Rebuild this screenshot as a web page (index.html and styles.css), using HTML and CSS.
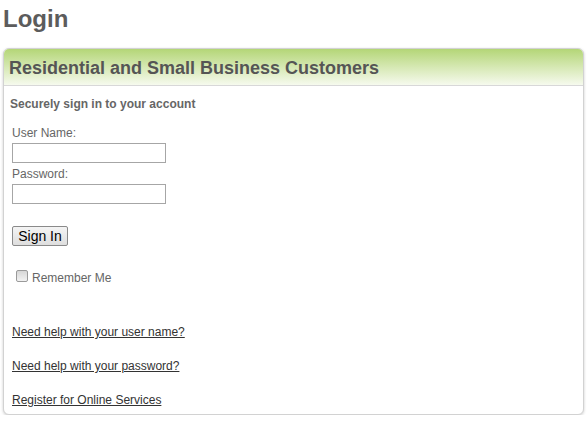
FILE: index.html
```html
<!DOCTYPE html>
<html lang="en">
<head>
<meta charset="utf-8">
<title>Login</title>
<link rel="stylesheet" href="styles.css">
</head>
<body>
  <h1 class="page-title">Login</h1>
  <section class="panel">
    <header class="panel-head">
      <h2 class="panel-title">Residential and Small Business Customers</h2>
    </header>
    <div class="panel-body">
      <p class="intro">Securely sign in to your account</p>
      <form class="login-form">
        <label class="field-label" for="user">User Name:</label>
        <input class="field-input" id="user" type="text">
        <label class="field-label field-label-pw" for="pw">Password:</label>
        <input class="field-input" id="pw" type="password">
        <button class="btn-signin" type="button">Sign In</button>
        <label class="remember"><input class="remember-box" type="checkbox"><span class="remember-text">Remember Me</span></label>
      </form>
      <ul class="help-links">
        <li><a href="#">Need help with your user name?</a></li>
        <li><a href="#">Need help with your password?</a></li>
        <li><a href="#">Register for Online Services</a></li>
      </ul>
    </div>
  </section>
</body>
</html>
```

FILE: styles.css
```css
html, body {
  margin: 0;
  padding: 0;
  background: #ffffff;
}
body {
  padding: 0 4px 0 3px;
  font-family: "Liberation Sans", Arial, sans-serif;
  color: #555555;
}
.page-title {
  margin: 5px 0 0 0;
  font-size: 24px;
  line-height: 28px;
  font-weight: bold;
  color: #5c5c5c;
}
.panel {
  margin-top: 15px;
  border: 1px solid #d2d2d2;
  border-radius: 6px;
  box-shadow: 0 1px 3px rgba(0, 0, 0, 0.2);
  background: #ffffff;
}
.panel-head {
  height: 36px;
  border-bottom: 1px solid #d8d8d8;
  border-radius: 5px 5px 0 0;
  background: linear-gradient(#b4d677, #d9eab9 55%, #f6faee);
  padding-left: 5px;
  display: flex;
  align-items: center;
}
.panel-title {
  margin: 0;
  padding-top: 2px;
  font-size: 18px;
  line-height: 22px;
  font-weight: bold;
  color: #555555;
}
.panel-body {
  padding: 0 6px 7px 6px;
  display: flex;
  flex-direction: column;
}
.intro {
  margin: 11px 0 0 0;
  font-size: 12px;
  line-height: 14px;
  font-weight: bold;
  color: #666666;
}
.login-form {
  margin: 15px 0 0 2px;
  display: flex;
  flex-direction: column;
  align-items: flex-start;
}
.field-label {
  font-size: 12px;
  line-height: 14px;
  color: #666666;
}
.field-label-pw {
  margin-top: 4px;
}
.field-input {
  margin: 3px 0 0 0;
  box-sizing: border-box;
  width: 154px;
  height: 20px;
  border: 1px solid #a6a6a6;
  padding: 0 2px;
  font-size: 12px;
  background: #ffffff;
}
.btn-signin {
  margin-top: 22px;
  box-sizing: border-box;
  width: 56px;
  height: 20px;
  padding: 0;
  font-family: "Liberation Sans", Arial, sans-serif;
  font-size: 14px;
  line-height: 17px;
  color: #000000;
  border: 1px solid #8a8a8a;
  border-radius: 2px;
  background: linear-gradient(#f4f4f4, #dedede);
}
.remember {
  margin: 24px 0 0 4px;
  display: flex;
  align-items: flex-start;
}
.remember-box {
  appearance: none;
  -webkit-appearance: none;
  margin: 0;
  width: 12px;
  height: 12px;
  box-sizing: border-box;
  border: 1px solid #9a9a9a;
  border-radius: 2px;
  background: linear-gradient(#d6d6d6, #f2f2f2);
}
.remember-text {
  margin-left: 4px;
  padding-top: 1px;
  font-size: 12px;
  line-height: 14px;
  color: #666666;
}
.help-links {
  list-style: none;
  margin: 40px 0 0 2px;
  padding: 0;
  display: flex;
  flex-direction: column;
  gap: 20px;
}
.help-links li {
  font-size: 12px;
  line-height: 14px;
}
.help-links a {
  color: #333333;
  text-decoration: underline;
}
```
